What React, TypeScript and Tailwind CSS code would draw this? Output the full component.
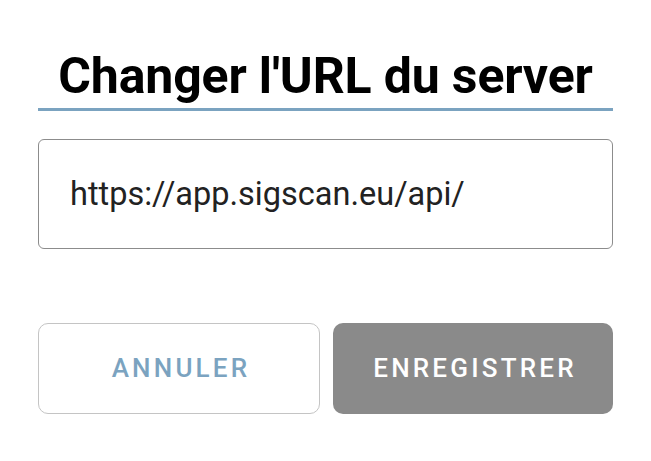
import React from 'react';

export default function App() {
    return (
        <div className="w-[651px] h-[461px] bg-white font-['Roboto',sans-serif] px-[38px] pt-[48px]">
            <h1 className="text-center text-[50px] leading-[56px] font-bold text-black tracking-[-0.15px]">
                Changer l'URL du server
            </h1>
            <div className="h-[3px] bg-[#7ba3c0] mt-[4px]" />
            <div className="mt-[28px] h-[110px] border-[1.5px] border-[#8c8c8c] rounded-[6px] flex items-center px-[31px]">
                <span className="text-[32.5px] text-[#222222]">https://app.sigscan.eu/api/</span>
            </div>
            <div className="mt-[74px] flex gap-[13px]">
                <button className="flex-1 h-[91px] pl-[4px] border-[1.5px] border-[#c4c4c4] rounded-[10px] bg-white text-[#7ba3c0] text-[26px] font-medium tracking-[3.2px]">
                    ANNULER
                </button>
                <button className="flex-1 h-[91px] pl-[4px] rounded-[10px] bg-[#8a8a8a] text-white text-[26px] font-medium tracking-[3.2px]">
                    ENREGISTRER
                </button>
            </div>
        </div>
    );
}
